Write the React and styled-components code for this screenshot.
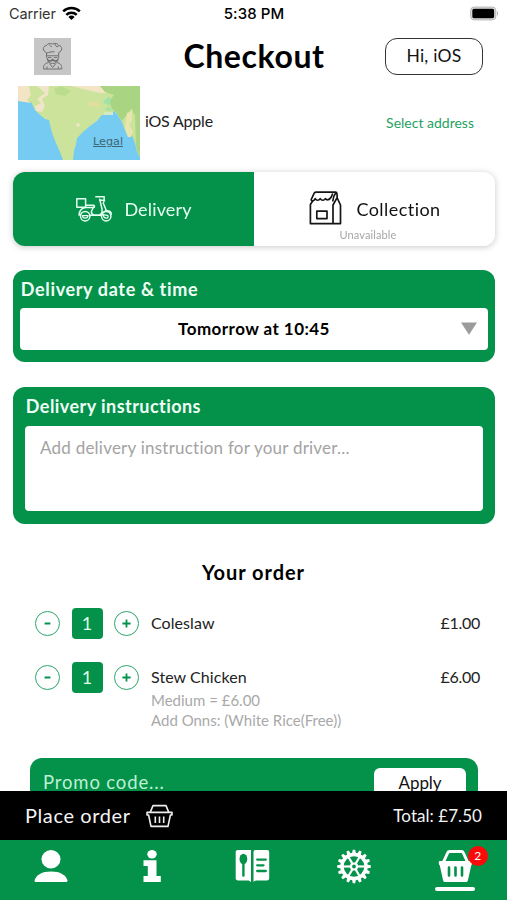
import React from 'react';
import styled, { createGlobalStyle } from 'styled-components';

const green = '#04914a';

const GlobalStyle = createGlobalStyle`
  * {
    box-sizing: border-box;
  }

  body {
    margin: 0;
    background-color: #fff;
    font-family: Lato, 'Liberation Sans', sans-serif;
    color: #111;
  }

  button, textarea, input {
    font-family: inherit;
    margin: 0;
  }
`;

const Screen = styled.div`
  width: 507px;
  height: 900px;
  display: flex;
  flex-direction: column;
  overflow: hidden;
`;

const StatusBar = styled.div`
  height: 28px;
  flex: none;
  padding: 0 8px 2px 9px;
  display: grid;
  grid-template-columns: 1fr auto 1fr;
  align-items: center;
  font-family: Inter, sans-serif;
  font-size: 14.5px;
`;

const Carrier = styled.div`
  display: flex;
  align-items: center;
  gap: 6px;
  letter-spacing: -0.1px;
  color: #333;
`;

const Clock = styled.div`
  font-size: 15px;
  font-weight: 500;
  letter-spacing: 0.1px;
  color: #000;
`;

const Battery = styled.svg`
  justify-self: end;
`;

const Content = styled.main`
  flex: 1;
  min-height: 0;
  overflow: hidden;
`;

const Header = styled.header`
  height: 56px;
  padding: 0 24px 0 34px;
  display: grid;
  grid-template-columns: 98px 1fr 98px;
  align-items: center;
`;

const Logo = styled.div`
  width: 37px;
  height: 37px;
  background-color: #c6c6c6;
`;

const Title = styled.h1`
  margin: 0 0 1px -9px;
  font-size: 32px;
  line-height: 38px;
  letter-spacing: 0.6px;
  text-align: center;
  color: #000;
`;

const Greeting = styled.button`
  height: 37px;
  padding: 0 0 2px;
  border: 1.5px solid #333;
  border-radius: 12px;
  background-color: transparent;
  font-size: 17.5px;
  letter-spacing: 0.25px;
  color: #111;
`;

const Address = styled.section`
  height: 87.5px;
  padding: 2px 33px 0 18px;
  display: flex;
`;

const Map = styled.div`
  position: relative;
  width: 122px;
  height: 74px;

  svg {
    display: block;
  }
`;

const Legal = styled.span`
  position: absolute;
  left: 75px;
  top: 49px;
  font: 11.2px/14px 'DejaVu Sans', sans-serif;
  text-decoration: underline;
  color: #3f6675;
`;

const Customer = styled.div`
  flex: 1;
  padding: 25px 0 0 5px;
  font-size: 16px;
  line-height: 20px;
  letter-spacing: -0.2px;
  color: #222;
`;

const SelectAddress = styled.a`
  padding-top: 27px;
  font-size: 14px;
  line-height: 20px;
  color: #1fa262;
`;

const Methods = styled.div`
  height: 74px;
  margin: 0 12px 0 13px;
  display: flex;
  border-radius: 12px;
  overflow: hidden;
  background-color: #fff;
`;

const MethodsShadow = styled.div`
  height: 74px;
  margin-bottom: 24px;
  filter: drop-shadow(0 1px 3px rgba(0, 0, 0, 0.22));
`;

const Method = styled.div`
  flex: ${props => (props.$active ? '0 0 241px' : '1')};
  display: grid;
  grid-template-rows: 74px;
  background-color: ${props => (props.$active ? green : '#fff')};
  color: ${props => (props.$active ? '#e8fff2' : '#111')};
`;

const MethodLabel = styled.div`
  display: flex;
  align-items: center;
  justify-content: center;
  gap: ${props => props.$gap}px;
  font-size: 18px;
  letter-spacing: ${props => props.$spacing}px;
`;

const Unavailable = styled.div`
  grid-area: 1 / 1;
  align-self: end;
  padding: 0 13px 4px 0;
  text-align: center;
  font-size: 11px;
  line-height: 14px;
  letter-spacing: 0.1px;
  color: #a6a6a6;
`;

const CollectionLabel = styled(MethodLabel)`
  grid-area: 1 / 1;
  padding-left: 1px;
`;

const Panel = styled.section`
  height: ${props => props.$height}px;
  margin: 0 12px 25px 13px;
  padding: 8px ${props => props.$inset}px 0;
  border-radius: 12px;
  background-color: ${green};
`;

const PanelTitle = styled.h2`
  margin: 0 0 ${props => props.$gap}px 0.8px;
  font-size: 18px;
  line-height: 22px;
  letter-spacing: ${props => props.$spacing}px;
  color: #effff6;
`;

const TimeSelect = styled.div`
  height: 42px;
  padding: 0 11px 1px;
  display: grid;
  grid-template-columns: 16px 1fr 16px;
  align-items: center;
  border-radius: 4px;
  background-color: #fff;
  font-size: 17px;
  font-weight: 700;
  letter-spacing: 0.45px;
  text-align: center;
  color: #000;
`;

const Instructions = styled.textarea`
  display: block;
  width: 100%;
  height: 85px;
  padding: 12px 15px;
  border: 0;
  border-radius: 4px;
  resize: none;
  background-color: #fff;
  font-size: 17px;
  line-height: 20px;
  letter-spacing: 0.23px;

  &::placeholder {
    color: #a3a3a3;
    opacity: 1;
  }
`;

const OrderTitle = styled.h2`
  margin: 36px 0 24px;
  font-size: 20px;
  line-height: 24px;
  letter-spacing: 0.95px;
  text-align: center;
  color: #000;
`;

const OrderRow = styled.div`
  min-height: 54px;
  padding: 0 27px 0 35px;
  display: flex;
`;

const Quantity = styled.div`
  width: 116px;
  height: 31px;
  display: flex;
  align-items: center;
  gap: 11.5px;
`;

const Count = styled.div`
  width: 31px;
  height: 31px;
  border-radius: 4px;
  background-color: ${green};
  font-size: 18px;
  line-height: 30px;
  text-align: center;
  color: #dcfbe9;
`;

const Step = styled.button`
  width: 25px;
  height: 25px;
  padding: 0;
  display: flex;
  align-items: center;
  justify-content: center;
  border: 1.3px solid #2ba56a;
  border-radius: 50%;
  background-color: #fff;
`;

const Item = styled.div`
  flex: 1;
  font-size: 16px;
  line-height: 30px;
  letter-spacing: 0.07px;
  color: #222;
`;

const Extra = styled.div`
  margin-top: ${props => (props.$first ? '-1.5px' : '0')};
  font-size: 15px;
  line-height: 20px;
  letter-spacing: 0;
  color: #a9a9a9;
`;

const Price = styled.div`
  font-size: 16px;
  line-height: 30px;
  letter-spacing: -0.3px;
  color: #222;
`;

const Promo = styled.div`
  height: 60px;
  margin: 27.5px 29px 0 30px;
  padding: 10px 12px 0 13px;
  display: flex;
  justify-content: space-between;
  border-radius: 12px;
  background-color: ${green};
`;

const PromoHint = styled.div`
  font-size: 18.5px;
  line-height: 29px;
  letter-spacing: 0.85px;
  color: #bdf0d3;
`;

const Apply = styled.button`
  width: 92px;
  height: 40px;
  padding: 0 0 10px;
  border: 0;
  border-radius: 6px;
  background-color: #fff;
  font-size: 17px;
  letter-spacing: -0.1px;
  color: #111;
`;

const PlaceOrder = styled.div`
  height: 49px;
  flex: none;
  padding: 0 25px 1px;
  display: flex;
  align-items: center;
  background-color: #000;
  font-size: 20px;
  letter-spacing: 0.6px;
  color: #f4f4f4;

  svg {
    margin: 1px 0 0 15px;
  }
`;

const Total = styled.div`
  margin-left: auto;
  font-size: 17px;
  letter-spacing: 0.05px;
`;

const Nav = styled.nav`
  height: 60px;
  flex: none;
  padding: 8px 0 0;
  display: grid;
  grid-template-columns: repeat(5, 101.2px);
  background-color: ${green};
`;

const NavItem = styled.div`
  position: relative;
  display: flex;
  flex-direction: column;
  align-items: center;

  svg {
    flex: none;
  }
`;

const ActiveLine = styled.div`
  width: 40px;
  height: 3.5px;
  margin-top: 3px;
  border-radius: 2px;
  background-color: #fff;
`;

const Badge = styled.div`
  position: absolute;
  left: 63px;
  top: -2px;
  width: 20px;
  height: 20px;
  border-radius: 50%;
  background-color: #fb0a0a;
  font-size: 12px;
  line-height: 20px;
  text-align: center;
  color: #fff;
`;

const WifiIcon = () => (
  <svg width="19" height="15" viewBox="0 0 19 15">
    <g fill="none" stroke="#000" strokeWidth="2.5">
      <path d="M1.2 5.3 A12 12 0 0 1 17.8 5.3" />
      <path d="M4.3 8.8 A7.4 7.4 0 0 1 14.7 8.8" />
    </g>
    <path d="M9.5 14 L6.4 10.9 A4.4 4.4 0 0 1 12.6 10.9 Z" fill="#000" />
  </svg>
);

const BatteryIcon = () => (
  <Battery width="29" height="15" viewBox="0 0 30 15">
    <rect x="0.7" y="0.9" width="26" height="13.2" rx="3.6" fill="#e4e4e4" stroke="#b0b0b0" />
    <rect x="2.4" y="2.7" width="22.6" height="9.6" rx="1.6" fill="#000" />
    <path d="M28 5 Q30 7.5 28 10 Z" fill="#aaa" />
  </Battery>
);

const ChefIcon = () => (
  <svg width="37" height="37" viewBox="0 0 37 37" fill="none" stroke="#707070" strokeWidth="1">
    <path d="M12.5 19.5 V14.5 C8.5 13.5 8 8 12.5 7.5 C13.5 5.5 16 5 18.3 6 C21 4.8 24 5.5 24.7 7.5 C29 8 28.5 13.5 24.7 14.5 V19.5" />
    <path d="M15.5 6.5 C16 8 17 8.6 18 8.6 M21 6 C21 8 22.5 9 24.5 8.5" />
    <path d="M12.5 15.5 C15.5 13.5 19 13.8 20.5 13.8 M12.5 17.8 H24.7 M14 19.6 H17.3 M20 19.6 H23.3" />
    <path d="M13 19.5 C13.5 23.5 15 25.5 18.6 25.5 C22 25.5 24 23.5 24.5 19.5" />
    <path d="M13.5 21.8 C15.5 23.5 17.5 23 18.6 21.5 C19.7 23 22 23.5 24 21.8" strokeWidth="1.6" />
    <path d="M14.5 24.5 C10.5 25.5 9.5 27 9.5 31 H27.8 C27.8 27 26.5 25.5 22.8 24.5 M13 31 V28.5 M24.3 31 V28.5 M15.5 25.5 L18.6 29.5 L22 25.5" />
  </svg>
);

const MapPicture = () => (
  <svg width="122" height="74" viewBox="0 0 122 74">
    <rect width="122" height="74" fill="#76cbf2" />
    <path d="M0 0 H122 V71 C119 67 118 62 117 57 L114 49 L110 51 L107 44 L104 36 L99 28 L96 25 L90 29 L84 29 L79 35 L72 40 L65 46 L59 52 L58 58 L56 65 L55 74 H45 L42 66 L38 57 L34 47 L31 34 L27 33 L21 28 L17 24 L13 16 L0 15 Z" fill="#cbe39b" />
    <path d="M0 0 H11 L13 9 L9 14 L13 17 L0 15 Z" fill="#f3e4c5" />
    <path d="M19 0 H31 L30 9 L24 13 L27 20 L24 26 L18 25 L17 20 L23 17 L19 13 L27 7 Z" fill="#f0e5c9" />
    <path d="M53 0 H86 L91 7 H82 L69 4 Z" fill="#f1e5c4" />
    <path d="M82 0 H122 V26 L116 29 L114 22 L104 35 L98 26 L94 23 L91 15 L96 9 L87 6 Z" fill="#a9d582" />
    <path d="M117 29 L122 25 V71 L118 61 Z" fill="#acd486" />
    <path d="M109 27 L114 25 L114 34 L111 39 L115 45 L113 51 L110 51 L107 43 Z" fill="#e8e5ae" />
    <path d="M69 17 C73 13 80 15 83 18 C80 23 72 22 69 17 Z" fill="#dddf9c" />
    <path d="M85 16 L91 10 L93 15 L90 20 L94 25 L87 24 L91 20 Z" fill="#a1e2aa" />
    <path d="M36 3 L43 0 L53 5 L47 10 L38 8 Z" fill="#b9dc8d" />
    <circle cx="60" cy="39" r="2" fill="#ece7c0" />
    <path d="M86 26 H95 V29 H86 Z" fill="#d4e8c4" />
  </svg>
);

const ScooterIcon = () => (
  <svg width="38" height="29" viewBox="0 -1 38 29" fill="none" stroke="#e4fff0" strokeWidth="1.5" strokeLinejoin="round" strokeLinecap="round">
    <path d="M1.8 3.8 H10.6 V12.2 H1.8 Z" />
    <path d="M11 10.2 H18.6 C19.8 10.2 19.8 12.5 18.4 12.5 H10.5 C6.5 13 4.4 16 4 20 H5.5" />
    <path d="M18.2 12.5 L16.4 16.5 C16.2 18 17.4 19.5 19 20.2 H24.2 C26 19.5 27.5 17 27 14 L24.7 4.2" />
    <path d="M20.8 1.8 H29.2 V5.2 H25 M29.5 5.2 L28.2 8 L31.2 15.2" />
    <path d="M14.5 20.2 H27 C27.5 17 30.5 15.2 33 15.8 C35 16.2 36.2 17.6 36.4 19.2" />
    <circle cx="10.2" cy="21.2" r="4.7" />
    <circle cx="31.2" cy="21.2" r="4.7" />
    <path d="M7.4 20.6 H13 C13 24 7.4 24 7.4 20.6 Z M28.4 19.6 L33 20.6 C34 24 29 24 28.4 20.6" strokeWidth="1.2" />
  </svg>
);

const BagIcon = () => (
  <svg width="33" height="35" viewBox="0 0 33 35" fill="none" stroke="#151515" strokeWidth="1.7" strokeLinejoin="round">
    <path d="M2 9 L5.2 2.2 C5.5 1.4 6 1.2 6.8 1.2 H26.4 C27.4 1.2 27.9 1.8 28 2.8 L28.2 7 L31.5 14 V32.6 H1.4 V13.5 L4 9.5" />
    <path d="M27 1.5 C25 4 24 7 23.7 10.5 M2 9 C3 10.4 5 10.2 6.2 7.6 C7.5 9.8 9.8 9.8 11.2 7.6 C12.6 9.8 15 9.8 16.4 7.6 C18 9.6 20.4 9 22.3 6 L23.7 2.5" />
    <path d="M28 6.8 L24 14 V32.6" />
    <path d="M7.8 20.2 H18 V27.6 H7.8 Z" />
  </svg>
);

const BasketOutlineIcon = () => (
  <svg width="27" height="24" viewBox="0 0 27 24" fill="none" stroke="#eee" strokeWidth="1.6" strokeLinejoin="round">
    <path d="M4.2 8.4 L7 1.6 H20 L22.8 8.4" />
    <path d="M1 8.4 H26 V11 H24.4 L22 22.4 H5 L2.6 11 H1 Z" />
    <path d="M9.3 12.5 V19 M13.5 12.5 V19 M17.7 12.5 V19" />
  </svg>
);

const PersonIcon = () => (
  <svg width="34" height="36" viewBox="0 0 34 36" fill="#fff">
    <ellipse cx="17" cy="11.2" rx="9.5" ry="9.2" />
    <path d="M0.5 32.5 C2 27 8 23.6 17 23.6 C26 23.6 32 27 33.5 32.5 C33.5 33.4 33 34 32 34 H2 C1 34 0.5 33.4 0.5 32.5 Z" />
  </svg>
);

const InfoIcon = () => (
  <svg width="18" height="36" viewBox="0 0 18 36" fill="#fff">
    <ellipse cx="9" cy="6.2" rx="4.7" ry="4.2" />
    <path d="M0.5 12.2 H13.5 V28 H17.8 V34 H0.5 V28 H4.8 V18 H0.5 Z" />
  </svg>
);

const MenuIcon = () => (
  <svg width="35" height="36" viewBox="0 0 35 36">
    <path d="M3 2 H16 V34 C15 33 14 32.4 12.5 32.4 H3 C1.5 32.4 0.7 31.6 0.7 30.2 V4.2 C0.7 2.8 1.5 2 3 2 Z" fill="#fff" />
    <path d="M18.5 34 V4 C18.5 2.8 19.2 2 20.5 2 H32 C33.4 2 34.2 2.8 34.2 4.2 V30.2 C34.2 31.6 33.4 32.4 32 32.4 H22 C20.4 32.4 19.5 33 18.5 34 Z" fill="#fff" />
    <ellipse cx="8.4" cy="11" rx="3.9" ry="5.3" fill={green} />
    <path d="M8.4 15 V27.5" stroke={green} strokeWidth="2.4" strokeLinecap="round" />
    <path d="M22.2 11.6 H30.8 M22.2 17.3 H28.5 M22.2 23 H30.8" stroke={green} strokeWidth="2.3" strokeLinecap="round" />
  </svg>
);

const GearIcon = () => {
  const teeth = Array.from({ length: 16 }, (_, i) => i * 22.5);
  const spokes = [0, 60, 120, 180, 240, 300];
  return (
    <svg width="36" height="36" viewBox="-18 -18.5 36 36" fill="none" stroke="#fff">
      {teeth.map(a => (
        <path key={a} d="M-2.1 -12.5 L-1.2 -16.8 H1.2 L2.1 -12.5 Z" fill="#fff" stroke="none" transform={`rotate(${a})`} />
      ))}
      <circle r="12" strokeWidth="3.4" />
      {spokes.map(a => (
        <path key={a} d="M0 -3 V-11" strokeWidth="2.2" transform={`rotate(${a + 30})`} />
      ))}
      <circle r="3" strokeWidth="2.2" />
    </svg>
  );
};

const BasketIcon = () => (
  <svg width="35" height="36" viewBox="0 0 35 36">
    <path d="M5.5 14 L9.6 5 C10 4 10.6 3.6 11.6 3.6 H23.4 C24.4 3.6 25 4 25.4 5 L29.5 14" fill="none" stroke="#fff" strokeWidth="3" />
    <path d="M1.5 13 H33.5 C34.5 13 34.5 16.5 33.2 17.4 L30 32 C29.7 33.4 29 34 27.8 34 H7.2 C6 34 5.3 33.4 5 32 L1.8 17.4 C0.5 16.5 0.5 13 1.5 13 Z" fill="#fff" />
    <path d="M11 19.5 V27.5 M17.5 19.5 V27.5 M24 19.5 V27.5" stroke={green} strokeWidth="2.6" strokeLinecap="round" />
  </svg>
);

const Stepper = ({ value }) => (
  <Quantity>
    <Step aria-label="Remove one">
      <svg width="11" height="11" viewBox="0 0 11 11">
        <path d="M2.6 5.5 H8.4" stroke={green} strokeWidth="2" />
      </svg>
    </Step>
    <Count>{value}</Count>
    <Step aria-label="Add one">
      <svg width="11" height="11" viewBox="0 0 11 11">
        <path d="M1.4 5.5 H9.6 M5.5 1.4 V9.6" stroke={green} strokeWidth="1.8" />
      </svg>
    </Step>
  </Quantity>
);

const order = [
  { name: 'Coleslaw', quantity: 1, price: '£1.00', extras: [] },
  {
    name: 'Stew Chicken',
    quantity: 1,
    price: '£6.00',
    extras: ['Medium = £6.00', 'Add Onns: (White Rice(Free))'],
  },
];

const App = () => {
  return (
    <Screen>
      <GlobalStyle />
      <StatusBar>
        <Carrier>
          Carrier
          <WifiIcon />
        </Carrier>
        <Clock>5:38 PM</Clock>
        <BatteryIcon />
      </StatusBar>
      <Content>
        <Header>
          <Logo><ChefIcon /></Logo>
          <Title>Checkout</Title>
          <Greeting>Hi, iOS</Greeting>
        </Header>
        <Address>
          <Map>
            <MapPicture />
            <Legal>Legal</Legal>
          </Map>
          <Customer>iOS Apple</Customer>
          <SelectAddress>Select address</SelectAddress>
        </Address>
        <MethodsShadow>
          <Methods>
            <Method $active>
              <MethodLabel $gap={11} $spacing={0.15}>
                <ScooterIcon />
                Delivery
              </MethodLabel>
            </Method>
            <Method>
              <CollectionLabel $gap={14} $spacing={0.45}>
                <BagIcon />
                Collection
              </CollectionLabel>
              <Unavailable>Unavailable</Unavailable>
            </Method>
          </Methods>
        </MethodsShadow>
        <Panel $height={92.5} $inset={7}>
          <PanelTitle $gap={8.5} $spacing={0.65}>Delivery date &amp; time</PanelTitle>
          <TimeSelect>
            <span />
            Tomorrow at 10:45
            <svg width="16" height="13" viewBox="0 0 16 13">
              <path d="M0 0.5 H16 L8 12.8 Z" fill="#9b9b9b" />
            </svg>
          </TimeSelect>
        </Panel>
        <Panel $height={136.5} $inset={12}>
          <PanelTitle $gap={9} $spacing={0.45}>Delivery instructions</PanelTitle>
          <Instructions placeholder="Add delivery instruction for your driver..." />
        </Panel>
        <OrderTitle>Your order</OrderTitle>
        {order.map(item => (
          <OrderRow key={item.name}>
            <Stepper value={item.quantity} />
            <Item>
              {item.name}
              {item.extras.map((extra, i) => (
                <Extra key={extra} $first={i === 0}>{extra}</Extra>
              ))}
            </Item>
            <Price>{item.price}</Price>
          </OrderRow>
        ))}
        <Promo>
          <PromoHint>Promo code...</PromoHint>
          <Apply>Apply</Apply>
        </Promo>
      </Content>
      <PlaceOrder>
        Place order
        <BasketOutlineIcon />
        <Total>Total: £7.50</Total>
      </PlaceOrder>
      <Nav>
        <NavItem><PersonIcon /></NavItem>
        <NavItem><InfoIcon /></NavItem>
        <NavItem><MenuIcon /></NavItem>
        <NavItem><GearIcon /></NavItem>
        <NavItem>
          <BasketIcon />
          <ActiveLine />
          <Badge>2</Badge>
        </NavItem>
      </Nav>
    </Screen>
  );
};

export default App;
